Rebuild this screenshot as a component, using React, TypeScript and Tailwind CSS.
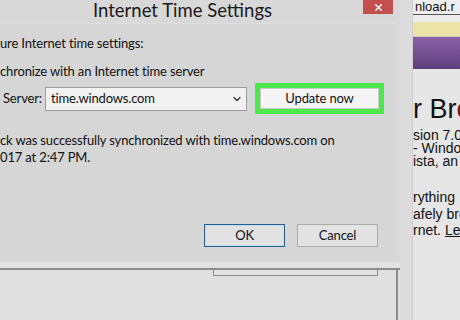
import React from 'react';
import { ChevronDown, X } from 'lucide-react';

const ui = { fontFamily: 'Lato, "Open Sans", sans-serif' };
const web = { fontFamily: '"Liberation Sans", Arial, sans-serif' };

export default function App() {
  return (
    <div className="relative w-[460px] h-[320px] overflow-hidden bg-[#e0e0e0] flex" style={ui}>
      {/* Dialog column */}
      <div className="w-[400px] shrink-0 flex flex-col">
        <div className="h-[262px] shrink-0 bg-[#d8d8d8] flex flex-col">
          {/* Title bar */}
          <div className="h-[23px] shrink-0 flex items-start relative">
            <div className="pl-[93px] text-[18.5px] leading-[20px] text-[#1a1a1a]">Internet Time Settings</div>
            <div className="absolute left-[363px] top-0 w-[30px] h-[14px] bg-[#c44f4f] flex items-center justify-center">
              <X className="w-[11px] h-[11px] text-white" strokeWidth={3} />
            </div>
          </div>
          {/* Content panel */}
          <div className="flex-1 mr-[5px] bg-[#d6d6d6] border-t border-[#dedede] flex flex-col text-[13px] tracking-[-0.15px] text-[#111]">
            <div className="h-[20px] mt-[9px] leading-[20px]">ure Internet time settings:</div>
            <div className="h-[20px] mt-[8px] leading-[20px]">chronize with an Internet time server</div>
            <div className="flex items-center mt-[2px] h-[31px]">
              <span className="ml-[3px] w-[42px]">Server:</span>
              <div className="w-[202px] h-[24px] bg-[#f2f2f2] border border-[#9e9e9e] flex items-center justify-between pl-[5px] pr-[3px]">
                <span>time.windows.com</span>
                <ChevronDown className="w-[12px] h-[12px] text-[#333]" strokeWidth={2.5} />
              </div>
              <div className="ml-[8px] w-[129px] h-[31px] bg-[#4de84a] p-[5px]">
                <div className="w-full h-full bg-[#f4f4f4] border border-[#c8c8c8] flex items-center justify-center">Update now</div>
              </div>
            </div>
            <div className="mt-[18px] leading-[17px]">ck was successfully synchronized with time.windows.com on</div>
            <div className="leading-[17px]">017 at 2:47 PM.</div>
            <div className="flex justify-end gap-[12px] mt-[58px] mr-[17px]">
              <div className="w-[81px] h-[23px] border border-[#2a5d8f] bg-[#e2e2e2] flex items-center justify-center">
                <div className="w-full h-full border border-[#bfe0f6] flex items-center justify-center">OK</div>
              </div>
              <div className="w-[81px] h-[23px] border border-[#acacac] bg-[#e2e2e2] flex items-center justify-center">Cancel</div>
            </div>
          </div>
        </div>
        {/* Bottom frame of dialog */}
        <div className="h-[8px] shrink-0 bg-[#e2e2e2] border-b-2 border-[#8c8c8c]"></div>
        <div className="flex">
          <div className="ml-[213px] w-[165px] h-[6px] border-l border-b border-r border-[#8a8a8a] bg-[#e4e4e4]"></div>
          <div className="ml-[18px] w-[2px] h-[60px] bg-[#8c8c8c]"></div>
        </div>
      </div>
      {/* Separator strip */}
      <div className="w-[13px] shrink-0 bg-[#dcdcdc] border-r border-[#cfcfcf]"></div>
      {/* Browser page behind */}
      <div className="flex-1 min-w-0 overflow-hidden bg-[#e6e6e6] flex flex-col text-[#111]" style={web}>
        <div className="h-[15px] shrink-0 border-b border-[#555] bg-[#eeeeee] text-[13px] leading-[13px] pl-[2px] overflow-hidden">nload.r</div>
        <div className="h-[7px] shrink-0 bg-[#ececec]"></div>
        <div className="h-[14px] shrink-0 bg-[#ece3a6]"></div>
        <div className="h-[33px] shrink-0 bg-gradient-to-b from-[#8a62a8] to-[#5e3f7e] border-t border-[#ccc]"></div>
        <div className="mt-[24px] text-[27px] leading-[32px] whitespace-nowrap">r Br<span className="text-[#7a1a1a]">o</span></div>
        <div className="text-[14px] leading-[13px] whitespace-nowrap mt-[4px]">
          <div>sion 7.0</div>
          <div>- Windo</div>
          <div>ista, an</div>
        </div>
        <div className="text-[14px] leading-[16.5px] whitespace-nowrap mt-[21px]">
          <div>rything</div>
          <div>afely bro</div>
          <div>rnet. <span className="underline">Le</span></div>
        </div>
      </div>
    </div>
  );
}
